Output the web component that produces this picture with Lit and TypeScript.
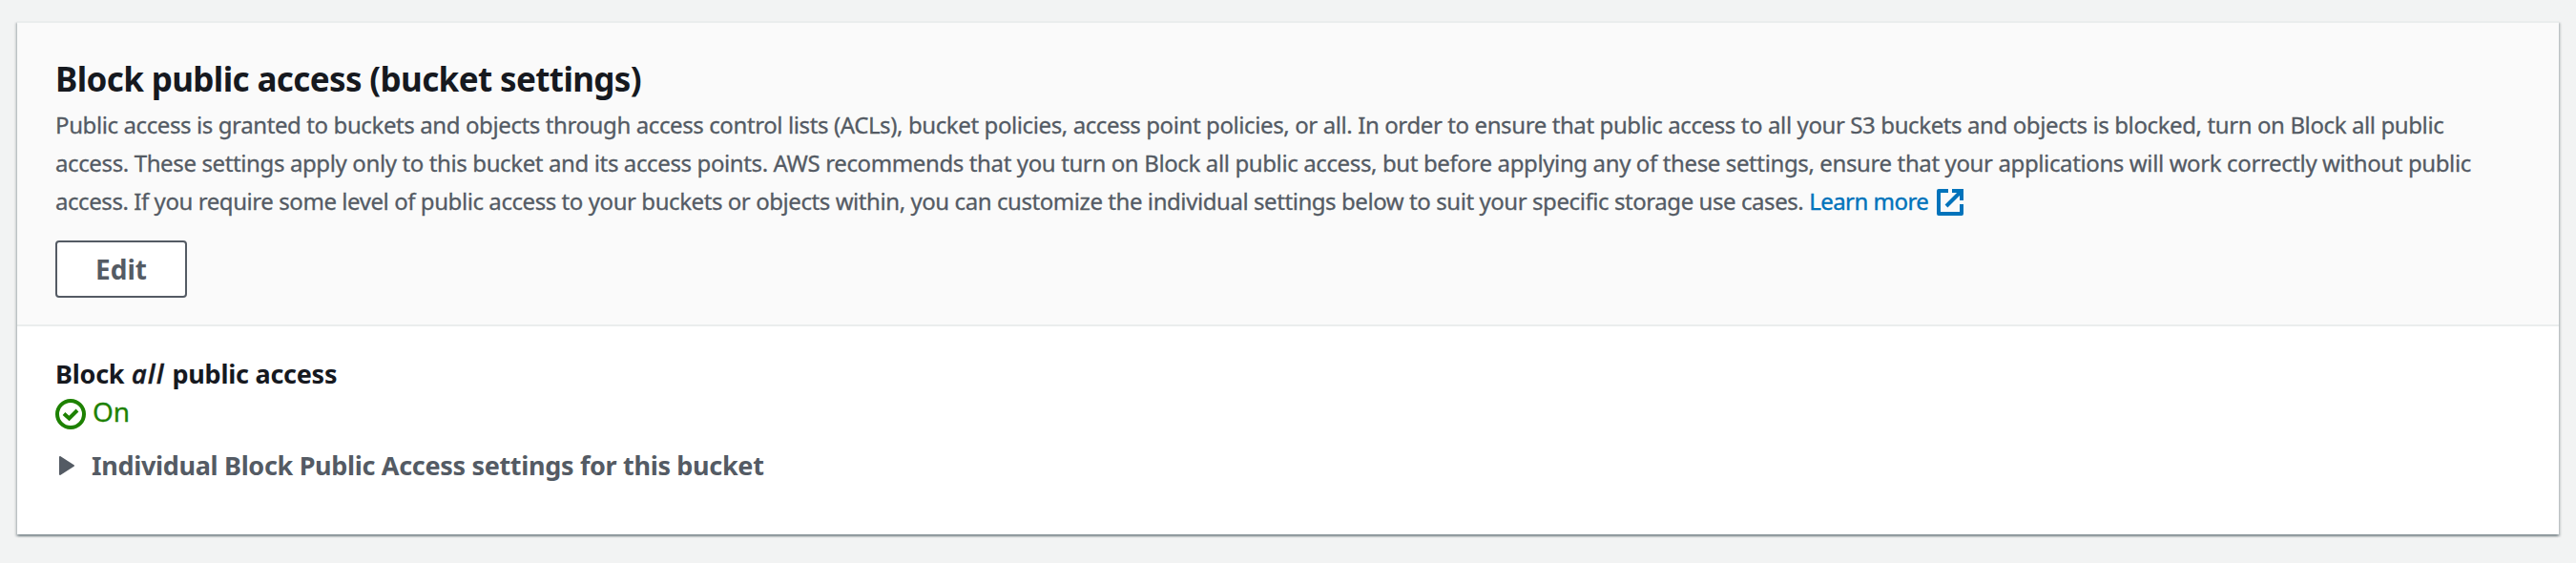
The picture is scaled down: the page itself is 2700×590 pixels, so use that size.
import { LitElement, html, css } from 'lit';
import { customElement } from 'lit/decorators.js';

@customElement('app-root')
export class AppRoot extends LitElement {
  static styles = css`
    :host {
      display: block;
      box-sizing: border-box;
      height: 590px;
      padding: 22px 18px 30px;
      background-color: #f2f3f3;
      font-family: "Noto Sans", "Open Sans", sans-serif;
      color: #16191f;
    }

    .container {
      box-sizing: border-box;
      height: 538px;
      background-color: #fff;
      border-top: 2px solid #eaeded;
      box-shadow: 0 2px 2px 0 rgba(0, 28, 36, 0.3),
        2px 2px 2px 0 rgba(0, 28, 36, 0.15),
        -2px 2px 2px 0 rgba(0, 28, 36, 0.15);
    }

    .header {
      box-sizing: border-box;
      height: 318px;
      padding: 37px 40px 0;
      background-color: #fafafa;
      border-bottom: 2px solid #eaeded;
    }

    h2 {
      margin: 0 0 6px;
      font-size: 35px;
      line-height: 44px;
      font-weight: 700;
      letter-spacing: -0.62px;
    }

    .description {
      margin: 0 0 21px;
      font-size: 24px;
      line-height: 40px;
      color: #545b64;
      white-space: nowrap;
      -webkit-text-stroke: 0.3px currentColor;
    }

    .line {
      display: flex;
      height: 40px;
      white-space: pre;
    }

    .first {
      letter-spacing: -0.394px;
    }

    .second {
      letter-spacing: -0.377px;
    }

    .third {
      letter-spacing: -0.43px;
    }

    .link {
      display: flex;
      color: #0073bb;
      letter-spacing: -0.53px;
      text-decoration: none;
      -webkit-text-stroke: 0.4px currentColor;
    }

    .external {
      width: 28px;
      height: 28px;
      margin: 7px 0 0 9px;
    }

    button {
      display: block;
      box-sizing: border-box;
      width: 138px;
      height: 60px;
      padding: 0;
      border: 2px solid #545b64;
      border-radius: 4px;
      background-color: #fff;
      color: #545b64;
      font: 700 28px/40px "Noto Sans", "Open Sans", sans-serif;
    }

    .content {
      padding: 28px 40px 0;
    }

    .label {
      font-size: 27px;
      line-height: 44px;
      font-weight: 700;
      letter-spacing: -0.25px;
    }

    .label em {
      margin: 0 1px;
      font-weight: 500;
      letter-spacing: 1.5px;
      -webkit-text-stroke: 0.7px currentColor;
    }

    .status {
      display: flex;
      align-items: flex-start;
      gap: 7px;
      height: 40px;
      font-size: 28px;
      line-height: 40px;
      color: #1d8102;
    }

    .check {
      width: 32px;
      height: 32px;
      margin-top: 4px;
    }

    .status span {
      margin-top: -3px;
      -webkit-text-stroke: 0.3px currentColor;
    }

    .expander {
      display: flex;
      align-items: center;
      margin-top: 12px;
      padding-left: 4px;
      gap: 18px;
      font-size: 27px;
      line-height: 44px;
      font-weight: 700;
      letter-spacing: -0.32px;
      color: #545b64;
    }

    .caret {
      width: 16px;
      height: 20px;
    }
  `;

  render() {
    return html`
      <section class="container">
        <div class="header">
          <h2>Block public access (bucket settings)</h2>
          <div class="description">
            <div class="line first">Public access is granted to buckets and objects through access control lists (ACLs), bucket policies, access point policies, or all. In order to ensure that public access to all your S3 buckets and objects is blocked, turn on Block all public</div>
            <div class="line second">access. These settings apply only to this bucket and its access points. AWS recommends that you turn on Block all public access, but before applying any of these settings, ensure that your applications will work correctly without public</div>
            <div class="line third"><span>access. If you require some level of public access to your buckets or objects within, you can customize the individual settings below to suit your specific storage use cases. </span><a class="link" href="#">Learn more<svg class="external" viewBox="0 0 28 28" fill="none" stroke="#0073bb" stroke-width="4">
              <path d="M12 2H2v24h24V16" stroke-linejoin="round" />
              <path d="M16 2h10v10M26 2L10 18" />
            </svg></a></div>
          </div>
          <button>Edit</button>
        </div>
        <div class="content">
          <div class="label">Block <em>all</em> public access</div>
          <div class="status">
            <svg class="check" viewBox="0 0 32 32" fill="none" stroke="#1d8102" stroke-width="4">
              <circle cx="16" cy="16" r="14" />
              <path d="M9 15.5l5.5 5L23 12" />
            </svg>
            <span>On</span>
          </div>
          <div class="expander">
            <svg class="caret" viewBox="0 0 16 20">
              <path d="M1 1v18l14-9z" fill="#545b64" stroke="#545b64" stroke-width="2" stroke-linejoin="round" />
            </svg>
            <span>Individual Block Public Access settings for this bucket</span>
          </div>
        </div>
      </section>
    `;
  }
}
